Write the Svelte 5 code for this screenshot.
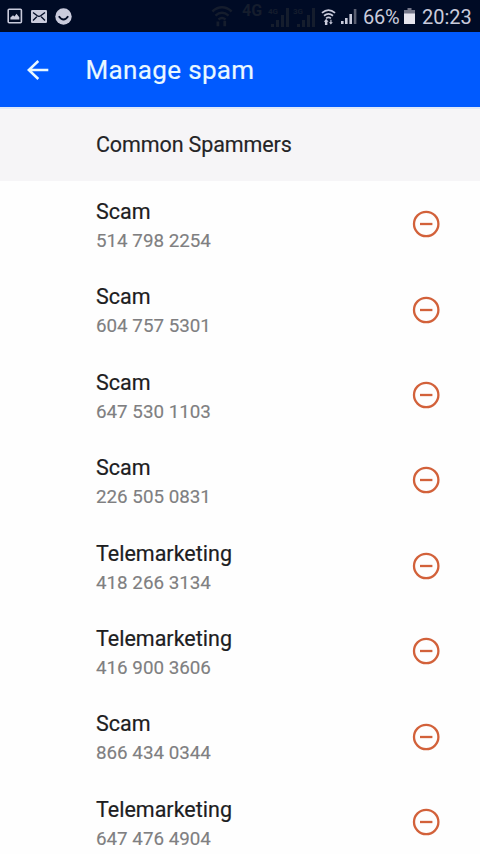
<script>
  const entries = [
    ['Scam', '514 798 2254'],
    ['Scam', '604 757 5301'],
    ['Scam', '647 530 1103'],
    ['Scam', '226 505 0831'],
    ['Telemarketing', '418 266 3134'],
    ['Telemarketing', '416 900 3606'],
    ['Scam', '866 434 0344'],
    ['Telemarketing', '647 476 4904']
  ];
</script>

{#snippet wifi()}
  <g fill="none" stroke="currentColor" stroke-width="1.8">
    <path d="M1 5.2Q8 -.8 15 5.2M3.2 8.2Q8 4.2 12.8 8.2M5.4 11Q8 9 10.6 11" />
  </g>
{/snippet}

<div class="screen">
  <div class="status">
    <div class="notices">
      <svg width="16" height="16" viewBox="0 0 16 16">
        <rect x="1.2" y="1.2" width="13.2" height="13.6" rx="1" fill="none" stroke="currentColor" stroke-width="1.6" />
        <path d="M3.4 11.5V9.5L6 7.2L7.5 8.4L9.5 5.8L12.3 9.2V11.5Z" fill="currentColor" />
      </svg>
      <svg class="mail" width="16" height="13" viewBox="0 0 16 13">
        <rect width="16" height="13" rx="1.3" fill="currentColor" />
        <path d="M2 2.5L6 5.6Q8 7 10 5.6L14 2.5M2 10.5L5.8 6.8M14 10.5L10.2 6.8" fill="none" stroke="#000b25" stroke-width="1.3" />
      </svg>
      <svg class="smile" width="17" height="17" viewBox="0 0 17 17">
        <circle cx="8.5" cy="8.5" r="8.2" fill="currentColor" />
        <path d="M3.8 8.2Q8.5 14.8 13.2 8.2" fill="none" stroke="#000b25" stroke-width="1.9" />
      </svg>
    </div>
    <div class="faded">
      <svg width="22" height="24" viewBox="0 0 16 17">{@render wifi()}<path d="M5 16V12.5M10 12V16" stroke="currentColor" stroke-width="2" /></svg>
      <span class="net">4G</span>
      <svg class="ghost" width="48" height="24" viewBox="0 0 48 24">
        <g fill="currentColor">
          <path d="M3 20H6V23H3ZM8 16H11V23H8ZM13 11H16V23H13ZM18 4H21V23H18ZM29 20H32V23H29ZM34 16H37V23H34ZM39 11H42V23H39ZM44 4H47V23H44Z" />
        </g>
        <text x="0" y="10">4G</text><text x="25" y="10">3G</text>
      </svg>
    </div>
    <div class="system">
      <svg width="15" height="17" viewBox="0 0 16 18">
        {@render wifi()}
        <path d="M5.5 11.5L8 14.5H6.8V18H4.2V14.5H3ZM10.5 17.5L8.5 15H10V12.5H11.2V15H12.6Z" fill="currentColor" />
      </svg>
      <svg class="signal" width="16" height="15" viewBox="0 0 16 15">
        <path d="M0 12H2.6V15H0ZM4 9H6.6V15H4ZM8.4 5H11V15H8.4Z" fill="currentColor" />
        <path d="M12.8 0H15.4V15H12.8Z" fill="#5b6072" />
      </svg>
      <span class="pct">66%</span>
      <svg class="battery" width="11" height="16" viewBox="0 0 11 16">
        <path d="M3.5 0H7.5V2H11V6H0V2H3.5Z" fill="#747789" />
        <path d="M0 5.5H11V16H0Z" fill="#e6e5ee" />
      </svg>
      <span class="time">20:23</span>
    </div>
  </div>

  <header>
    <svg width="22" height="20" viewBox="0 0 22 20">
      <path d="M11.3 1L1.8 10L11.3 19M2 10H21.3" fill="none" stroke="#e9f8ff" stroke-width="2.5" />
    </svg>
    <h1>Manage spam</h1>
  </header>

  <h2><span>Common Spammers</span></h2>

  <ul>
    {#each entries as [label, number]}
      <li>
        <div class="info">
          <span class="label">{label}</span>
          <span class="number">{number}</span>
        </div>
        <svg width="28" height="28" viewBox="0 0 28 28">
          <circle cx="14.2" cy="14" r="12.2" />
          <path d="M8 14H20.4" />
        </svg>
      </li>
    {/each}
  </ul>
</div>

<style>
  :global(body) { background: #fefefe; }
  .screen {
    width: 480px;
    height: 854px;
    overflow: hidden;
    display: flex;
    flex-direction: column;
    font-family: Roboto, sans-serif;
    background: #fefefe;
  }
  .screen span, h1 { white-space: nowrap; }
  svg { display: block; flex: none; }
  .status {
    flex: none;
    height: 32px;
    display: flex;
    align-items: center;
    background: #000b25;
    color: #c9cbdc;
  }
  .notices { display: flex; align-items: center; width: 211px; padding-left: 7px; box-sizing: border-box; flex: none; height: 33px; }
  .mail { margin-left: 8px; }
  .smile { margin-left: 8px; }
  .faded { display: flex; align-items: center; width: 109px; flex: none; color: #151d2d; }
  .net { font: bold 16px/16px Roboto, sans-serif; margin: -10px 0 0 9px; }
  .ghost { margin-left: 6px; }
  .ghost text { font: bold 8px Roboto, sans-serif; fill: currentColor; }
  .system { display: flex; align-items: center; height: 34px; padding-left: 1px; }
  .signal { margin-left: 5px; }
  .pct { font-size: 20px; margin-left: 6px; width: 37px; letter-spacing: -.3px; padding-top: 1px; }
  .battery { margin-left: 4px; }
  .time { font-size: 20px; margin-left: 7px; padding-top: 1px; }
  header {
    flex: none;
    height: 75px;
    display: flex;
    align-items: center;
    padding: 0 0 0 27px;
    box-sizing: border-box;
    background: #005aff;
  }
  h1 {
    margin: 1px 0 0 36.5px;
    font-size: 26px;
    line-height: 30px;
    font-weight: 400;
    letter-spacing: .35px;
    color: #e9f8ff;
    -webkit-text-stroke: .2px #e9f8ff;
  }
  h2 {
    flex: none;
    margin: 0;
    height: 74px;
    box-sizing: border-box;
    border-top: 2px solid #dfe8f8;
    padding: 23px 0 0 96px;
    background: #f6f5f7;
    color: #242426;
    font-size: 21.5px;
    line-height: 26px;
    font-weight: 400;
    letter-spacing: -.12px;
    -webkit-text-stroke: .15px #242426;
  }
  ul { margin: 0; padding: .5px 0 0; list-style: none; }
  li {
    height: 85.4px;
    box-sizing: border-box;
    display: flex;
    align-items: center;
    justify-content: space-between;
    padding: 0 40px 0 96px;
  }
  .info { display: flex; flex-direction: column; padding-top: 4px; }
  .label { font-size: 21.5px; line-height: 30px; color: #1d1d1f; -webkit-text-stroke: .2px #1d1d1f; }
  .number { font-size: 18.8px; line-height: 28.5px; color: #7f7f81; -webkit-text-stroke: .15px #7f7f81; }
  li svg { fill: none; stroke: #d2613a; stroke-width: 2.3; }
</style>
